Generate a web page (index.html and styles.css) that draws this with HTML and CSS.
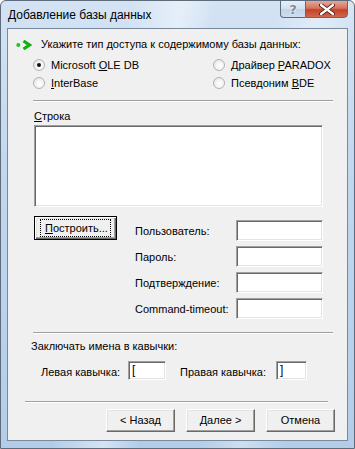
FILE: index.html
```html
<!DOCTYPE html>
<html lang="ru">
<head>
<meta charset="utf-8">
<title>Добавление базы данных</title>
<link rel="stylesheet" href="styles.css">
</head>
<body>
<div class="window">
  <div class="titlebar">
    <span class="title">Добавление базы данных</span>
    <div class="caption-buttons">
      <span class="cap-btn help">?</span>
      <span class="cap-btn close">
        <svg width="16" height="11" viewBox="0 0 16 11"><path d="M2 1 L14 10 M14 1 L2 10" stroke="#4a1a10" stroke-width="4" stroke-linecap="round"/><path d="M2 1 L14 10 M14 1 L2 10" stroke="#ffffff" stroke-width="2.2" stroke-linecap="round"/></svg>
      </span>
    </div>
  </div>
  <div class="client">
    <div class="hint">
      <svg class="hint-icon" width="16" height="10" viewBox="0 0 16 10"><circle cx="2.3" cy="5" r="2" fill="#22c622"/><path d="M7.5 1 L13.5 5 L7.5 9" fill="none" stroke="#0fb40f" stroke-width="3.2"/></svg>
      <span>Укажите тип доступа к содержимому базы данных:</span>
    </div>
    <div class="radios">
      <label class="radio"><span class="rb checked"></span><span>Microsoft <u>O</u>LE DB</span></label>
      <label class="radio"><span class="rb"></span><span>Драйвер <u>P</u>ARADOX</span></label>
      <label class="radio"><span class="rb"></span><span><u>I</u>nterBase</span></label>
      <label class="radio"><span class="rb"></span><span>Псевдоним <u>B</u>DE</span></label>
    </div>
    <div class="sep"></div>
    <div class="field-label"><u>С</u>трока</div>
    <div class="edit textarea"></div>
    <div class="conn">
      <div class="btn default"><span class="focus"><u>П</u>остроить...</span></div>
      <div class="creds">
        <span class="cl">Пользователь:</span><span class="edit cedit"></span>
        <span class="cl">Пароль:</span><span class="edit cedit"></span>
        <span class="cl">Подтверждение:</span><span class="edit cedit"></span>
        <span class="cl">Command-timeout:</span><span class="edit cedit"></span>
      </div>
    </div>
    <div class="sep sep2"></div>
    <div class="quote-title">Заключать имена в кавычки:</div>
    <div class="quotes">
      <span class="ql">Левая кавычка:</span><span class="edit qedit left">[</span>
      <span class="ql right-label">Правая кавычка:</span><span class="edit qedit right">]</span>
    </div>
    <div class="sep sep3"></div>
    <div class="buttons">
      <div class="btn nav">&lt; Назад</div>
      <div class="btn nav">Далее &gt;</div>
      <div class="btn nav">Отмена</div>
    </div>
  </div>
</div>
</body>
</html>
```

FILE: styles.css
```css
html, body {
  margin: 0;
  padding: 0;
}
body {
  width: 355px;
  height: 449px;
  overflow: hidden;
  font-family: "Liberation Sans", Arial, sans-serif;
  font-size: 11px;
  color: #000;
}
.window {
  width: 355px;
  height: 449px;
  box-sizing: border-box;
  border: 1px solid #5d6b7b;
  border-radius: 6px 6px 0 0;
  background:
    linear-gradient(100deg, rgba(255,255,255,0) 30%, rgba(255,255,255,0.45) 42%, rgba(255,255,255,0) 50%, rgba(255,255,255,0) 64%, rgba(255,255,255,0.35) 74%, rgba(255,255,255,0) 84%),
    linear-gradient(to bottom, #d3e3f4 0%, #c1d7ee 40%, #b3cde9 100%);
  display: flex;
  flex-direction: column;
}
.titlebar {
  height: 27px;
  display: flex;
  align-items: flex-start;
  flex: none;
}
.title {
  font-size: 12px;
  line-height: 15px;
  margin: 7px 0 0 7px;
  color: #000;
}
.caption-buttons {
  margin-left: auto;
  margin-right: 6px;
  margin-top: -1px;
  display: flex;
  height: 18px;
}
.cap-btn {
  box-sizing: border-box;
  height: 18px;
  display: flex;
  align-items: center;
  justify-content: center;
  border: 1px solid #5a6a80;
}
.help {
  width: 25px;
  border-right: none;
  border-radius: 0 0 0 4px;
  background: linear-gradient(to bottom, #e6eef8 0%, #d3e0ef 50%, #c2d3e7 51%, #cfdeef 100%);
  color: #7c8a9a;
  font-family: "DejaVu Sans", sans-serif;
  font-weight: bold;
  font-size: 13px;
  text-shadow: 0 0 1px #fff, 0 0 2px #fff;
}
.close {
  width: 43px;
  border-radius: 0 0 4px 0;
  background: linear-gradient(to bottom, #e7a796 0%, #d6735c 45%, #c3412a 55%, #d2684c 100%);
}
.client {
  flex: 1;
  margin: 0 6px 7px 6px;
  border: 1px solid #7a8a9c;
  background: #f0f0f0;
  position: relative;
}
.hint {
  display: flex;
  align-items: center;
  height: 13px;
  margin: 9px 0 0 8px;
  line-height: 13px;
}
.hint-icon {
  flex: none;
  margin-right: 9px;
  margin-top: 1px;
}
.radios {
  margin: 5px 0 0 25px;
  display: grid;
  grid-template-columns: 180px auto;
  grid-auto-rows: 18px;
}
.radio {
  display: flex;
  align-items: center;
  line-height: 13px;
}
.rb {
  width: 12px;
  height: 12px;
  box-sizing: border-box;
  border-radius: 50%;
  border: 1px solid #b2b2b2;
  background: radial-gradient(circle at 60% 60%, #ffffff 0%, #f4f4f4 45%, #d9d9d9 100%);
  margin-right: 6px;
  position: relative;
  flex: none;
}
.rb.checked::after {
  content: "";
  position: absolute;
  left: 3px;
  top: 3px;
  width: 4px;
  height: 4px;
  border-radius: 50%;
  background: #111;
}
.sep {
  margin: 8px 0 0 25px;
  width: 300px;
  border-top: 1px solid #a0a0a0;
  border-bottom: 1px solid #ffffff;
  height: 0;
}
.field-label {
  margin: 8px 0 0 26px;
  line-height: 13px;
}
.edit {
  box-sizing: border-box;
  background: #fff;
  border-top: 1px solid #a0a0a0;
  border-left: 1px solid #a0a0a0;
  border-right: 1px solid #ffffff;
  border-bottom: 1px solid #ffffff;
  box-shadow: inset 1px 1px 0 #696969, inset -1px -1px 0 #e3e3e3;
}
.textarea {
  margin: 2px 0 0 26px;
  width: 289px;
  height: 82px;
}
.conn {
  display: flex;
  margin: 9px 0 0 26px;
  align-items: flex-start;
}
.btn {
  box-sizing: border-box;
  display: flex;
  align-items: center;
  justify-content: center;
  background: #f0f0f0;
  border-top: 1px solid #ffffff;
  border-left: 1px solid #ffffff;
  border-right: 1px solid #696969;
  border-bottom: 1px solid #696969;
  box-shadow: inset -1px -1px 0 #a0a0a0, inset 1px 1px 0 #e3e3e3;
  line-height: 13px;
}
.btn.default {
  width: 83px;
  height: 24px;
  border: 1px solid #000;
  box-shadow: inset 1px 1px 0 #ffffff, inset -1px -1px 0 #696969, inset -2px -2px 0 #a0a0a0, inset 2px 2px 0 #e3e3e3;
  flex: none;
}
.focus {
  border: 1px dotted #000;
  padding: 2px 3px 1px 3px;
  line-height: 13px;
  width: 71px;
  box-sizing: border-box;
  text-align: left;
  padding-left: 4px;
}
.creds {
  margin: 4px 0 0 18px;
  display: grid;
  grid-template-columns: 101px 87px;
  grid-auto-rows: 21px;
  row-gap: 5px;
  align-items: center;
}
.cl {
  line-height: 13px;
  padding-top: 1px;
}
.cedit {
  height: 21px;
}
.sep2 {
  margin-top: 13px;
}
.quote-title {
  margin: 6px 0 0 23px;
  line-height: 13px;
}
.quotes {
  margin: 8px 0 0 33px;
  display: flex;
  align-items: center;
  height: 19px;
}
.ql {
  line-height: 13px;
  padding-top: 3px;
}
.qedit {
  height: 19px;
  line-height: 16px;
  padding-left: 3px;
  font-size: 12px;
}
.qedit.left {
  width: 38px;
  margin-left: 8px;
}
.right-label {
  margin-left: 14px;
}
.qedit.right {
  width: 31px;
  margin-left: 10px;
}
.sep3 {
  margin: 21px 0 0 17px;
  width: 303px;
}
.buttons {
  display: flex;
  margin: 6px 0 0 98px;
  gap: 11px;
}
.btn.nav {
  width: 69px;
  height: 23px;
}
```
